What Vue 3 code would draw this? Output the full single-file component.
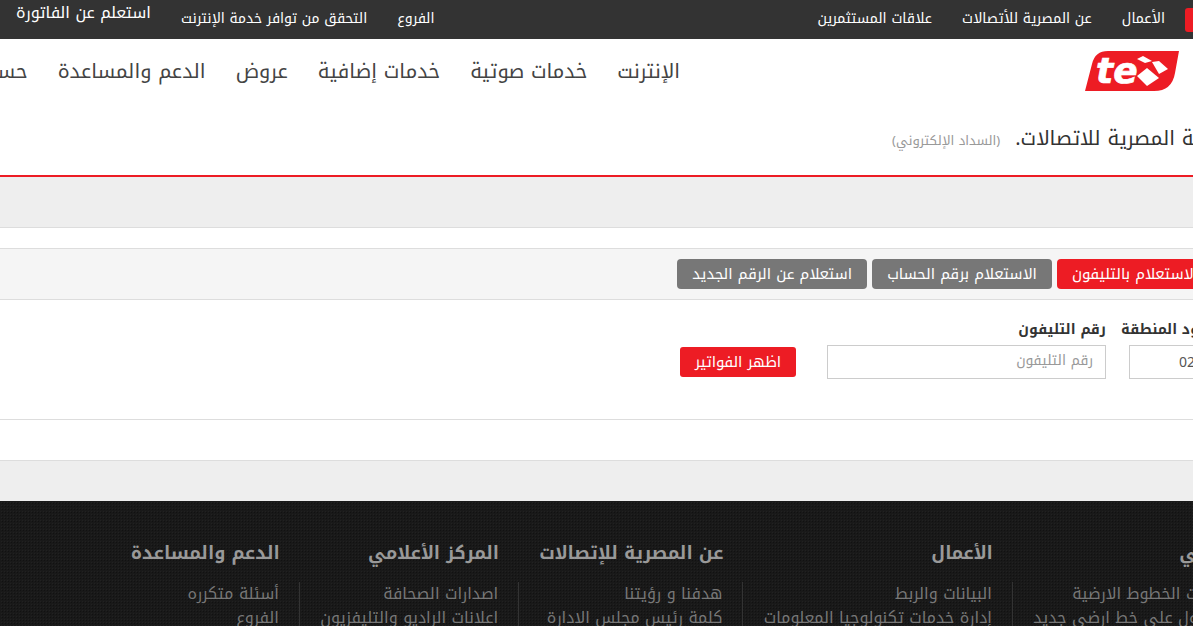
<script setup>
const leftLinks = ['الفروع', 'التحقق من توافر خدمة الإنترنت']
const rightLinks = ['الأعمال', 'عن المصرية للأتصالات', 'علاقات المستثمرين']
const nav = ['الإنترنت', 'خدمات صوتية', 'خدمات إضافية', 'عروض', 'الدعم والمساعدة', 'حساب']
const tabs = [
  { label: 'الاستعلام بالتليفون', red: true },
  { label: 'الاستعلام برقم الحساب' },
  { label: 'استعلام عن الرقم الجديد' }
]
const cols = [
  { title: 'منزلي', items: ['خدمات الخطوط الارضية', 'للحصول على خط ارضي جديد'] },
  { title: 'الأعمال', items: ['البيانات والربط', 'إدارة خدمات تكنولوجيا المعلومات'] },
  { title: 'عن المصرية للإتصالات', items: ['هدفنا و رؤيتنا', 'كلمة رئيس مجلس الادارة'] },
  { title: 'المركز الأعلامي', items: ['اصدارات الصحافة', 'اعلانات الراديو والتليفزيون'] },
  { title: 'الدعم والمساعدة', items: ['أسئلة متكرره', 'الفروع'] }
]
</script>

<template>
  <div class="page">
    <header class="topbar">
      <div class="top-right">
        <span class="top-badge"></span>
        <a v-for="l in rightLinks" :key="l">{{ l }}</a>
      </div>
      <div class="top-left">
        <a v-for="l in leftLinks" :key="l">{{ l }}</a>
        <a class="bill">استعلم عن الفاتورة</a>
      </div>
    </header>

    <div class="mainnav">
      <svg class="logo" width="94" height="40" viewBox="0 0 94 40">
        <path d="M0 40 L7 13 Q10 0 23 0 L94 0 L90 22 Q87 40 69 40 Z" fill="#ed1c24" />
        <text x="11" y="32" class="logo-text">te</text>
        <polygon points="52,8 58,5 67,10 60,12" fill="#fff" />
        <polygon points="67,11 74,10 83,18 74,23" fill="#fff" />
        <polygon points="52,25 62,17 74,27 62,35" fill="#fff" />
      </svg>
      <nav class="navlinks">
        <a v-for="n in nav" :key="n">{{ n }}</a>
      </nav>
    </div>

    <div class="title">
      <h1>الشركة المصرية للاتصالات.</h1>
      <small>(السداد الإلكتروني)</small>
    </div>

    <div class="grey-band"></div>
    <div class="gap-row"></div>

    <div class="tabs">
      <button v-for="t in tabs" :key="t.label" class="tab" :class="{ red: t.red }">{{ t.label }}</button>
    </div>

    <form class="form" @submit.prevent>
      <div class="field code">
        <label>كود المنطقة</label>
        <input value="02" />
      </div>
      <div class="field phone">
        <label>رقم التليفون</label>
        <input placeholder="رقم التليفون" />
      </div>
      <button class="submit">اظهر الفواتير</button>
    </form>

    <div class="blank-row"></div>
    <div class="pre-footer"></div>

    <footer class="footer">
      <div v-for="c in cols" :key="c.title" class="col">
        <h3>{{ c.title }}</h3>
        <ul>
          <li v-for="i in c.items" :key="i">{{ i }}</li>
        </ul>
      </div>
    </footer>
  </div>
</template>

<style>
html, body { margin: 0; overflow: hidden; background: #fff; }
</style>

<style scoped>
.page {
  width: 1193px;
  height: 626px;
  overflow: hidden;
  direction: rtl;
  font-family: "Noto Kufi Arabic", "DejaVu Sans", sans-serif;
  color: #333;
}
.topbar {
  height: 39px;
  background: #333;
  display: flex;
  justify-content: space-between;
  color: #fff;
  font-size: 14px;
}
.top-right, .top-left { display: flex; align-items: center; gap: 30px; height: 37px; }
.top-right { margin-right: -20px; }
.top-left { padding-left: 16px; }
.top-badge { width: 28px; height: 24px; background: #ed1c24; border-radius: 3px 0 0 3px; margin: 2px 0 0 -10px; }
.bill { font-size: 16px; position: relative; top: -6px; }
.mainnav { height: 68px; display: flex; align-items: flex-start; }
.logo { margin: 12px 14px 0 0; flex: none; }
.logo-text { font: italic 700 36px "DejaVu Sans", sans-serif; fill: #fff; stroke: #fff; stroke-width: .7; direction: ltr; }
.navlinks { display: flex; gap: 30px; margin: 18px 405px 0 0; font-size: 20px; color: #444; white-space: nowrap; line-height: 28px; }
.title { height: 68px; display: flex; align-items: flex-start; gap: 15px; margin-right: -50px; white-space: nowrap; box-sizing: border-box; padding-top: 18px; }
.title h1 { margin: 0; font-size: 20px; font-weight: 400; line-height: 26px; color: #333; }
.title small { font-size: 13px; color: #999; line-height: 32px; }
.grey-band { height: 50px; background: #eee; border-top: 2px solid #ed1c24; }
.gap-row { height: 20px; border-top: 1px solid #ddd; }
.tabs { height: 50px; background: #f5f5f5; border-top: 1px solid #ddd; border-bottom: 1px solid #ddd; display: flex; align-items: center; gap: 5px; margin-right: -20px; }
.tab { height: 30px; border: 0; border-radius: 4px; background: #777; color: #fff; font: 15px "Noto Kufi Arabic", "DejaVu Sans", sans-serif; padding: 0 15px; white-space: nowrap; }
.tab.red { background: #ed1c24; }
.form { height: 119px; border-bottom: 1px solid #ddd; display: flex; align-items: flex-start; margin-right: -15px; }
.field { display: flex; flex-direction: column; padding-top: 21px; }
.field label { font-size: 14px; font-weight: 700; line-height: 18px; margin-bottom: 6px; white-space: nowrap; color: #333; }
.field input { height: 34px; box-sizing: border-box; border: 1px solid #ccc; font: 14px "Noto Kufi Arabic", "DejaVu Sans", sans-serif; padding: 0 12px; outline: 0; color: #555; background: #fff; }
.field input::placeholder { color: #999; }
.code { width: 79px; }
.code input { width: 79px; }
.phone { margin-right: 23px; }
.phone input { width: 279px; padding-bottom: 4px; }
.submit { margin: 47px 31px 0 0; height: 30px; width: 116px; background: #ed1c24; color: #fff; border: 0; border-radius: 3px; font: 15px "Noto Kufi Arabic", "DejaVu Sans", sans-serif; }
.blank-row { height: 40px; }
.pre-footer { height: 40px; background: #eee; border-top: 1px solid #ddd; }
.footer {
  height: 125px;
  display: flex;
  align-items: flex-start;
  padding-top: 40px;
  box-sizing: border-box;
  margin-right: -58px;
  color: #777;
  background-color: #191919;
  background-image:
    radial-gradient(rgba(255,255,255,.035) 1px, transparent 1px),
    radial-gradient(rgba(0,0,0,.3) 1px, transparent 1px);
  background-size: 3px 3px, 3px 3px;
  background-position: 0 0, 1px 1px;
}
.col { flex: none; white-space: nowrap; }
.col h3 { margin: 0 20px 17px; font-size: 18px; font-weight: 700; color: #999; line-height: 24px; }
.col ul { margin: 0; padding: 0 20px 0 20.25px; list-style: none; font-size: 16px; line-height: 24px; }
.col + .col ul { border-right: 1px solid #333; }
</style>
